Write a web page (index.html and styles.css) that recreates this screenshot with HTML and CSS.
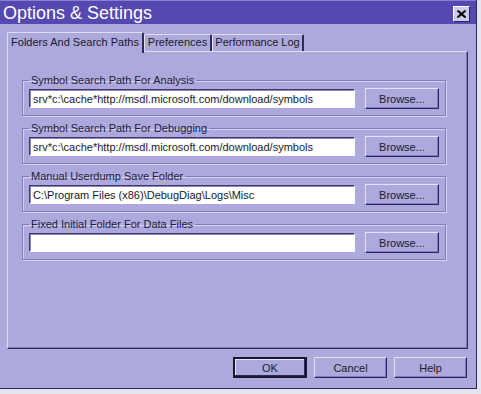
FILE: index.html
```html
<!DOCTYPE html>
<html lang="en">
<head>
  <meta charset="UTF-8">
  <title>Options &amp; Settings</title>
  <link rel="stylesheet" href="styles.css">
</head>
<body>

<div class="window">
  <div class="titlebar">
    <span class="title">Options &amp; Settings</span>
    <button class="close-btn">
      <svg width="9" height="8" viewBox="0 0 9 8">
        <path d="M0.5 0.5 L8.5 7.5 M8.5 0.5 L0.5 7.5" stroke="#000" stroke-width="2" />
      </svg>
    </button>
  </div>

  <div class="dialog">
    <div class="tabs">
      <div class="tab active">Folders And Search Paths</div>
      <div class="tab tab-prefs">Preferences</div>
      <div class="tab tab-perf">Performance Log</div>
    </div>

    <div class="panel">
      <fieldset class="group">
        <legend>Symbol Search Path For Analysis</legend>
        <div class="row">
          <input type="text" class="path" value="srv*c:\cache*http://msdl.microsoft.com/download/symbols">
          <button class="btn">Browse...</button>
        </div>
      </fieldset>

      <fieldset class="group">
        <legend>Symbol Search Path For Debugging</legend>
        <div class="row">
          <input type="text" class="path" value="srv*c:\cache*http://msdl.microsoft.com/download/symbols">
          <button class="btn">Browse...</button>
        </div>
      </fieldset>

      <fieldset class="group">
        <legend>Manual Userdump Save Folder</legend>
        <div class="row">
          <input type="text" class="path" value="C:\Program Files (x86)\DebugDiag\Logs\Misc">
          <button class="btn">Browse...</button>
        </div>
      </fieldset>

      <fieldset class="group">
        <legend>Fixed Initial Folder For Data Files</legend>
        <div class="row">
          <input type="text" class="path" value="">
          <button class="btn">Browse...</button>
        </div>
      </fieldset>
    </div>

    <div class="actions">
      <button class="btn default">OK</button>
      <button class="btn">Cancel</button>
      <button class="btn">Help</button>
    </div>
  </div>
</div>

</body>
</html>
```

FILE: styles.css
```css
* {
  box-sizing: border-box;
  margin: 0;
  padding: 0;
}

body {
  background: #e4e3ee;
  font-family: 'Liberation Sans', Arial, sans-serif;
  font-size: 11px;
  color: #1a1a2a;
}

.window {
  width: 477px;
  height: 389px;
  background: #ada9dd;
  border-right: 1px solid #2e2a5a;
  border-bottom: 1px solid #2e2a5a;
  display: flex;
  flex-direction: column;
}

.titlebar {
  height: 24px;
  background: #5548b0;
  border-top: 1px solid #8a80d0;
  display: flex;
  align-items: center;
  justify-content: space-between;
  padding: 0 6px 0 3px;
}

.title {
  color: #ffffff;
  font-size: 18px;
  line-height: 22px;
}

.close-btn {
  width: 17px;
  height: 16px;
  background: #cdcaee;
  border: 1px solid;
  border-color: #ffffff #2a2660 #2a2660 #ffffff;
  display: flex;
  align-items: center;
  justify-content: center;
  margin-top: 2px;
}

.dialog {
  flex: 1;
  padding: 8px 8px 0 7px;
  display: flex;
  flex-direction: column;
}

.tabs {
  display: flex;
  align-items: flex-end;
  height: 19px;
  position: relative;
  z-index: 1;
}

.tab {
  height: 17px;
  line-height: 15px;
  text-align: center;
  white-space: nowrap;
  background: #ada9dd;
  border-top: 1px solid #dedcf6;
  border-left: 1px solid #dedcf6;
  border-right: 2px solid #2e2a5a;
  border-radius: 2px 2px 0 0;
  font-size: 11px;
}

.tab.active {
  width: 137px;
  height: 21px;
  line-height: 19px;
  margin-bottom: -2px;
}

.tab-prefs {
  width: 68px;
}

.tab-perf {
  width: 92px;
}

.panel {
  height: 298px;
  border: 1px solid;
  border-color: #dedcf6 #2e2a5a #2e2a5a #dedcf6;
  box-shadow: inset -1px -1px 0 #7f7bbf;
  padding: 22px 0 0 14px;
  display: flex;
  flex-direction: column;
  gap: 6px;
}

.group {
  width: 424px;
  border: 1px solid #7f7bbf;
  box-shadow: inset 1px 1px 0 #d6d4f2, 1px 1px 0 #d6d4f2;
  padding: 0 6px 6px 6px;
}

.group legend {
  padding: 0 2px;
  line-height: 13px;
  color: #22203a;
}

.row {
  display: flex;
  align-items: center;
  gap: 10px;
  margin-top: 1px;
}

.path {
  width: 326px;
  height: 19px;
  border: 1px solid;
  border-color: #3a3670 #ffffff #ffffff #3a3670;
  box-shadow: inset 1px 1px 0 #8c88c4;
  background: #ffffff;
  padding: 0 3px;
  font-family: 'Liberation Sans', Arial, sans-serif;
  font-size: 11px;
  color: #1a1a2a;
  outline: none;
}

.btn {
  width: 74px;
  height: 21px;
  background: #ada9dd;
  border: 1px solid;
  border-color: #e4e2f8 #2a2660 #2a2660 #e4e2f8;
  box-shadow: inset -1px -1px 0 #7f7bbf;
  font-family: 'Liberation Sans', Arial, sans-serif;
  font-size: 11px;
  color: #1a1a2a;
}

.actions {
  display: flex;
  justify-content: flex-end;
  gap: 7px;
  margin-top: 8px;
  padding-right: 1px;
}

.actions .btn {
  width: 73px;
}

.actions .btn.default {
  width: 74px;
  border: 2px solid #1a1830;
  box-shadow: inset -1px -1px 0 #2a2660, inset 1px 1px 0 #e4e2f8;
}
```
